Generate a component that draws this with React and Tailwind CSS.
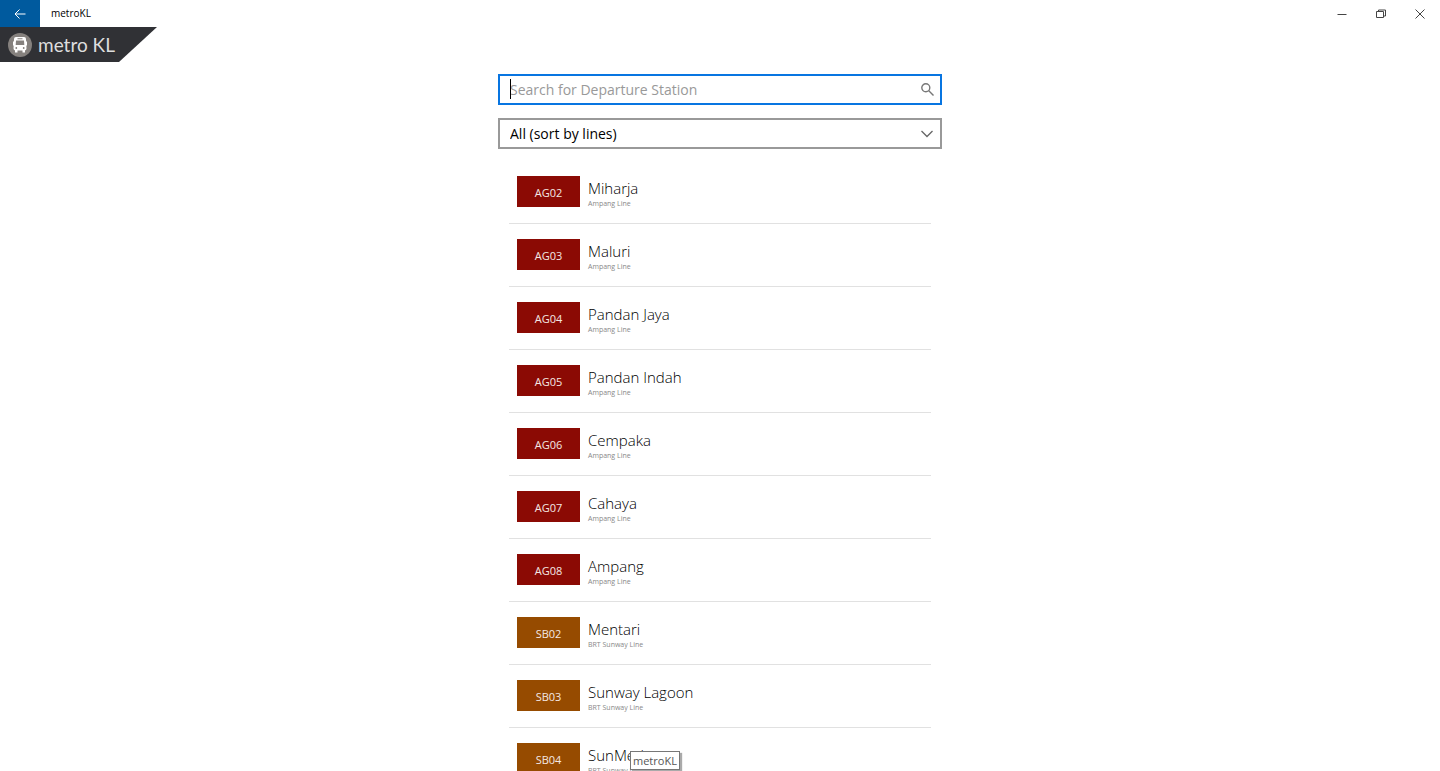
import { useState } from "react";

const stations = [
  { code: "AG02", name: "Miharja", line: "Ampang Line" },
  { code: "AG03", name: "Maluri", line: "Ampang Line" },
  { code: "AG04", name: "Pandan Jaya", line: "Ampang Line" },
  { code: "AG05", name: "Pandan Indah", line: "Ampang Line" },
  { code: "AG06", name: "Cempaka", line: "Ampang Line" },
  { code: "AG07", name: "Cahaya", line: "Ampang Line" },
  { code: "AG08", name: "Ampang", line: "Ampang Line" },
  { code: "SB02", name: "Mentari", line: "BRT Sunway Line" },
  { code: "SB03", name: "Sunway Lagoon", line: "BRT Sunway Line" },
  { code: "SB04", name: "SunMed", line: "BRT Sunway Line", tooltip: "metroKL" },
];

const lineColors = {
  "Ampang Line": "bg-[#8b0a04]",
  "BRT Sunway Line": "bg-[#964b00]",
};

function TitleBar() {
  return (
    <header className="flex h-[27px] shrink-0 items-stretch">
      <button type="button" aria-label="Back" className="flex w-10 items-center justify-center bg-[#005a9e] text-white">
        <svg width="12" height="10" viewBox="0 0 12 10" fill="none" stroke="currentColor" strokeWidth="1">
          <path d="M1 5h10.5M5.5 0.5L1 5l4.5 4.5" />
        </svg>
      </button>
      <span className="flex items-center pl-[11px] text-[10px] text-black">metroKL</span>
      <div className="ml-auto flex pr-px text-[#444]">
        <button type="button" aria-label="Minimize" className="flex w-[39px] items-center justify-center">
          <svg width="10" height="10" viewBox="0 0 10 10" stroke="currentColor">
            <path d="M0.5 5.5h9" />
          </svg>
        </button>
        <button type="button" aria-label="Restore" className="flex w-[39px] items-center justify-center">
          <svg width="10" height="10" viewBox="0 0 10 10" fill="none" stroke="currentColor">
            <path d="M0.5 2.5h7v6h-7zM2.5 2.5v-1.500h7v6h-2" />
          </svg>
        </button>
        <button type="button" aria-label="Close" className="flex w-[39px] items-center justify-center">
          <svg width="10" height="10" viewBox="0 0 10 10" stroke="currentColor">
            <path d="M0.5 0.5l9 9M9.5 0.5l-9 9" />
          </svg>
        </button>
      </div>
    </header>
  );
}

function Logo() {
  return (
    <div className="flex h-[35px] w-[157px] shrink-0 items-center gap-[6px] bg-[#303135] pl-2 [clip-path:polygon(0_0,100%_0,119px_100%,0_100%)]">
      <svg width="24" height="24" viewBox="0 0 24 24">
        <circle cx="12" cy="12" r="12" fill="#85817e" />
        <path d="M8 4h8q2 0 2 2l0.500 9.500q0 2-2 2h-9q-2 0-2-2L6 6q0-2 2-2z" fill="#fff" />
        <path d="M5 8.500h1.500v4H5zM17.500 8.500H19v4h-1.500zM7 17h2.500v2.500H7zM14.500 17H17v2.500h-2.500z" fill="#fff" />
        <path d="M9.500 5.200h5v1h-5zM8 7.500h8l0.300 4.500H7.700z" fill="#85817e" />
        <circle cx="8.300" cy="15" r="0.900" fill="#85817e" />
        <circle cx="15.700" cy="15" r="0.900" fill="#85817e" />
      </svg>
      <span className="whitespace-nowrap font-['Lato','Open_Sans',sans-serif] text-[19px] leading-6 text-[#dedede]">
        metro KL
      </span>
    </div>
  );
}

function StationRow({ station }) {
  return (
    <li className="relative flex h-[63px] items-center border-b border-[#e1e1e1] pl-2">
      <span className={`mb-px flex h-[31px] w-[63px] shrink-0 items-center justify-center pt-[3px] text-[11px] leading-4 text-[#f4e8e4] ${lineColors[station.line]}`}>
        {station.code}
      </span>
      <div className="pl-2 pt-[2px]">
        <p className="text-[15px] font-light leading-5 text-black">{station.name}</p>
        <p className="mt-px text-[7px] leading-[10px] text-[#888]">{station.line}</p>
      </div>
      {station.tooltip && (
        <span role="tooltip" className="absolute left-[121px] top-[23px] h-[19px] border border-[#777] bg-white px-[2px] text-[11px] leading-[18px] text-[#555] shadow-[2px_2px_1px_#aaa]">
          {station.tooltip}
        </span>
      )}
    </li>
  );
}

export default function App() {
  const [search, setSearch] = useState("");
  const [sort, setSort] = useState("lines");

  return (
    <div className="flex h-screen flex-col overflow-hidden bg-white font-['Open_Sans','Noto_Sans',sans-serif]">
      <TitleBar />
      <Logo />

      <main className="mx-auto w-full max-w-[444px] pt-3">
        <div className="relative">
          <input
            type="text"
            aria-label="Search for Departure Station"
            placeholder="Search for Departure Station"
            value={search}
            onChange={(e) => setSearch(e.target.value)}
            className="block h-[31px] w-full border-2 border-[#0875e1] bg-white pl-[10px] pr-9 text-[14px] text-black outline-none placeholder:text-[#999]"
          />
          <span className="pointer-events-none absolute left-3 top-[5px] h-5 w-px bg-black" />
          <svg className="pointer-events-none absolute right-2 top-[9px]" width="13" height="13" viewBox="0 0 13 13" fill="none" stroke="#777" strokeWidth="1.4">
            <circle cx="4.800" cy="4.800" r="4" />
            <path d="M7.800 7.800l4.700 4.700" />
          </svg>
        </div>

        <div className="relative mt-[13px]">
          <select
            aria-label="Sort stations"
            value={sort}
            onChange={(e) => setSort(e.target.value)}
            className="block h-[31px] w-full appearance-none border-2 border-[#999] bg-white pl-[10px] pr-9 text-[14px] text-black outline-none"
          >
            <option value="lines">All (sort by lines)</option>
            <option value="names">All (sort by names)</option>
          </select>
          <svg className="pointer-events-none absolute right-[9px] top-3" width="12" height="8" viewBox="0 0 12 8" fill="none" stroke="#666" strokeWidth="1.3">
            <path d="M0.500 1L6 6.500 11.500 1" />
          </svg>
        </div>

        <ul className="mx-[11px] mt-3">
          {stations.map((station) => (
            <StationRow key={station.code} station={station} />
          ))}
        </ul>
      </main>
    </div>
  );
}
